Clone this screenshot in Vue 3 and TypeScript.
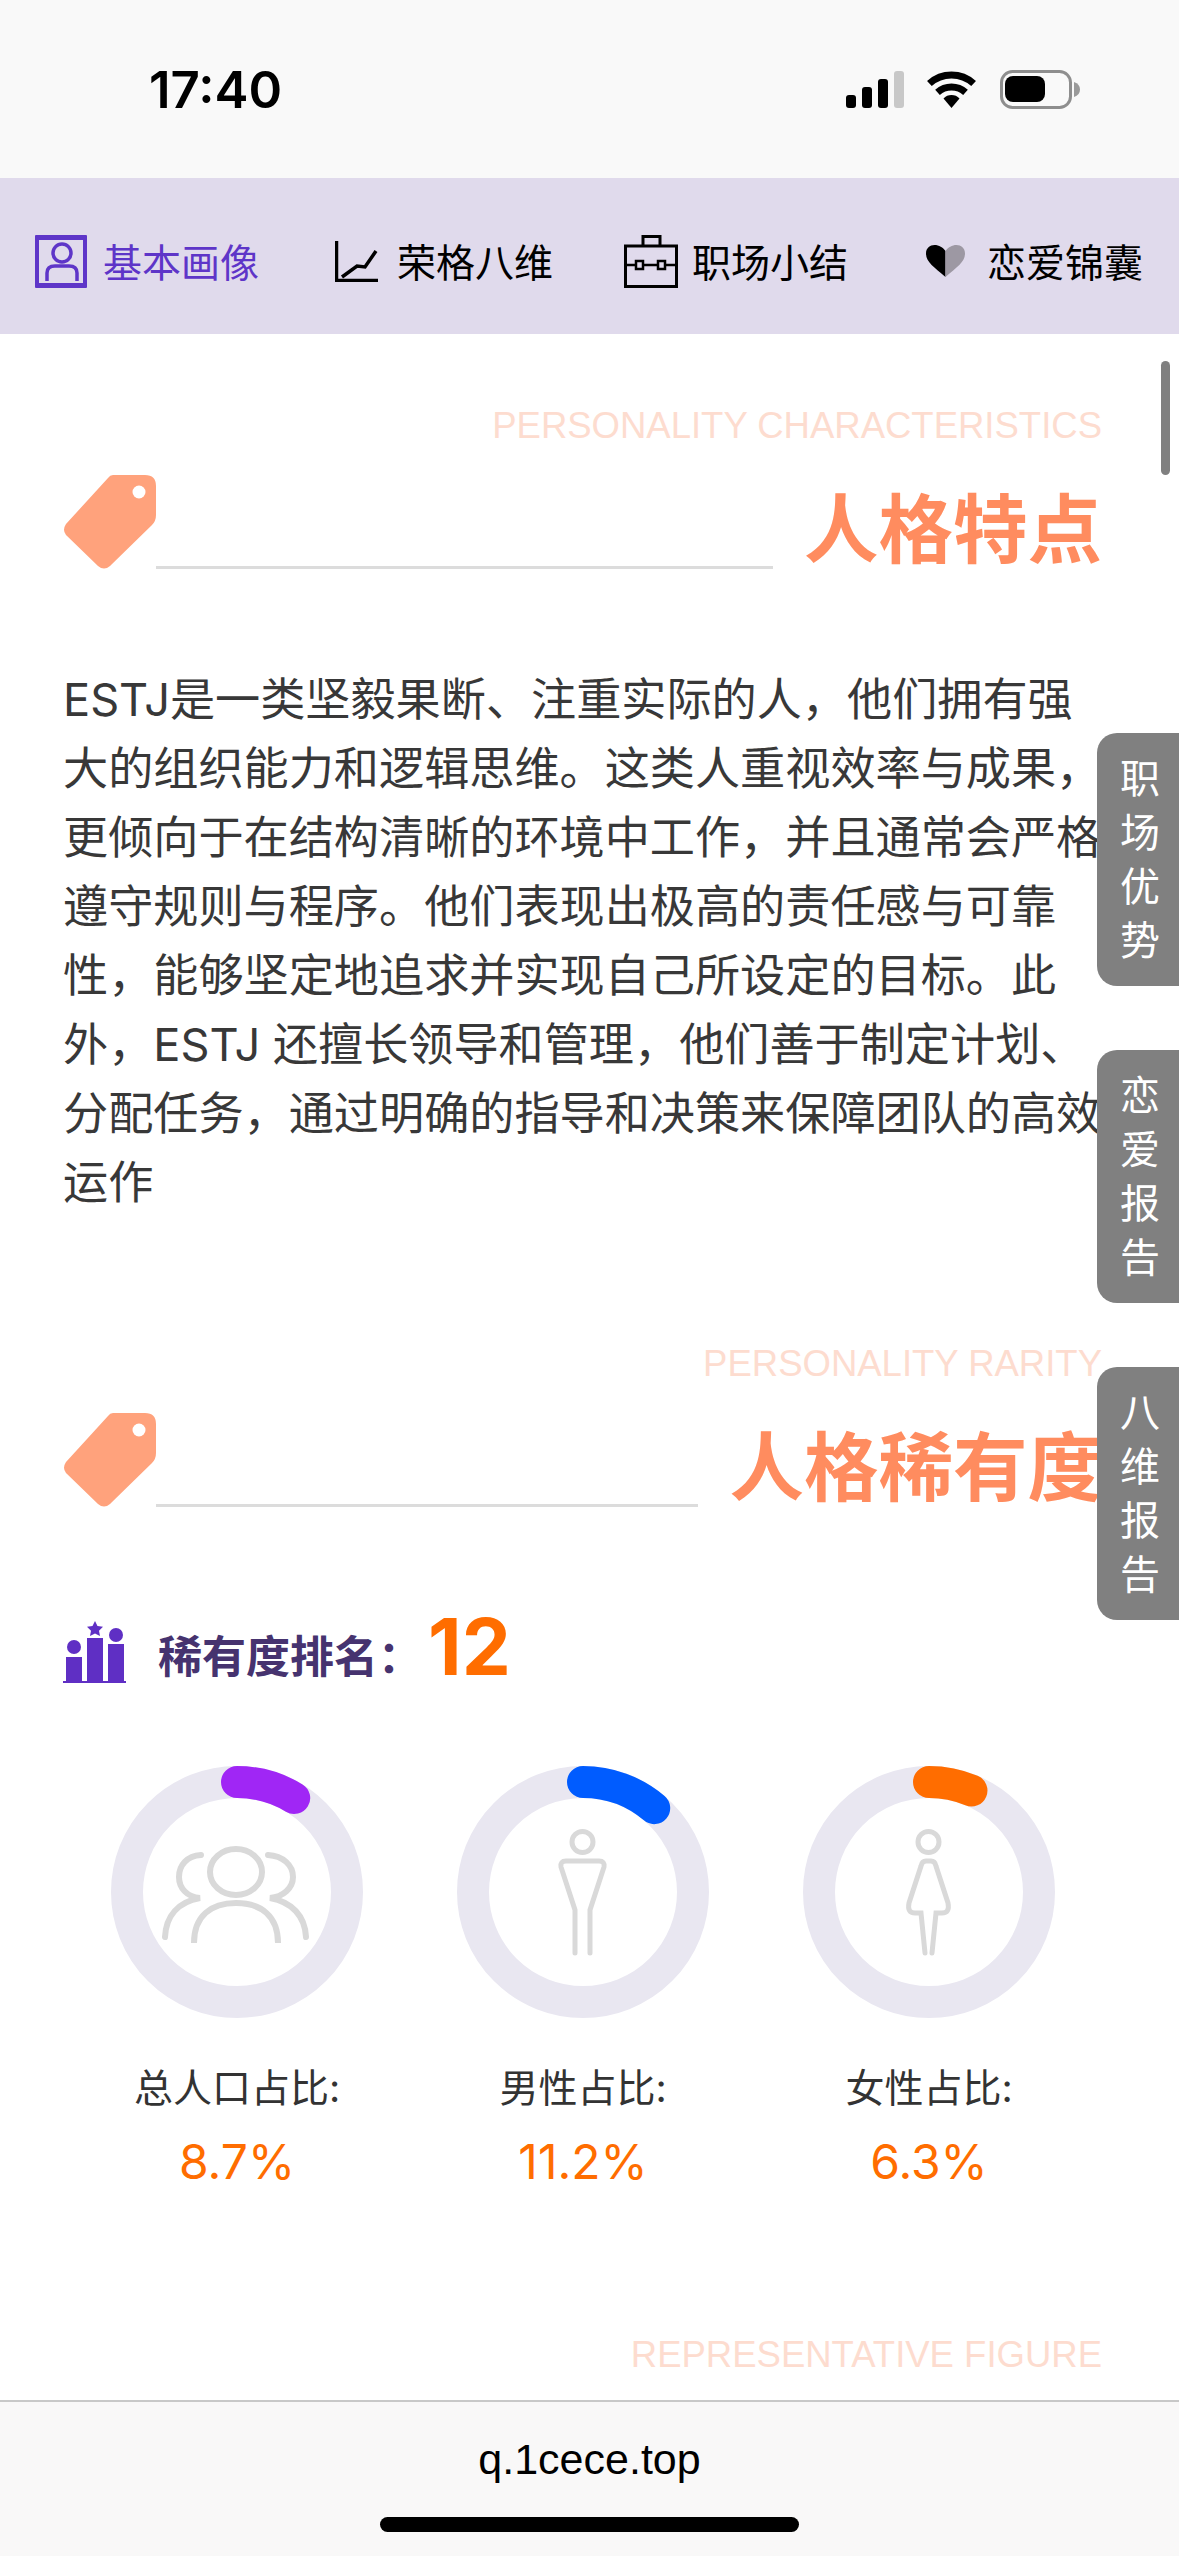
<template>
  <div class="phone">
    <!-- status bar -->
    <div class="status-bar">
      <span class="status-bar__time">17:40</span>
      <div class="status-bar__icons">
        <svg class="icon-signal" viewBox="0 0 58 37">
          <rect x="0" y="24" width="10" height="13" rx="3" fill="#000" />
          <rect x="16" y="16" width="10" height="21" rx="3" fill="#000" />
          <rect x="32" y="8" width="10" height="29" rx="3" fill="#000" />
          <rect x="48" y="0" width="10" height="37" rx="3" fill="#c8c8c8" />
        </svg>
        <svg class="icon-wifi" viewBox="0 0 51 37">
          <path d="M3.4 12.5A33 33 0 0 1 47.6 12.5" fill="none" stroke="#000" stroke-width="7" />
          <path d="M11.5 21.4A21 21 0 0 1 39.5 21.4" fill="none" stroke="#000" stroke-width="7" />
          <path d="M25.5 37L17.5 27.5A11 11 0 0 1 33.5 27.5Z" fill="#000" />
        </svg>
        <svg class="icon-battery" viewBox="0 0 80 39">
          <rect x="1.5" y="1.5" width="69" height="36" rx="11" fill="none" stroke="#8e8e8e" stroke-width="3" />
          <rect x="5" y="6" width="40" height="26" rx="8" fill="#000" />
          <path d="M74 12Q80 14 80 19.500Q80 25 74 27Z" fill="#9a9a9a" />
        </svg>
      </div>
    </div>

    <!-- tabs -->
    <div class="tabs">
      <div class="tab tab--active">
        <svg class="tab__icon tab__icon--profile" viewBox="0 0 52 53">
          <rect x="2" y="2.500" width="48" height="48" rx="1" fill="none" stroke="#5e35c8" stroke-width="4" />
          <rect x="0" y="0" width="52" height="5" rx="1" fill="#5e35c8" />
          <rect x="0" y="48" width="52" height="5" rx="1" fill="#5e35c8" />
          <circle cx="27" cy="18" r="9" fill="none" stroke="#5e35c8" stroke-width="3.500" />
          <path d="M12 46V38Q12 31 20 31H34Q42 31 42 38V46" fill="none" stroke="#5e35c8" stroke-width="3.500" />
        </svg>
        <span class="tab__text">基本画像</span>
      </div>
      <div class="tab">
        <svg class="tab__icon tab__icon--chart" viewBox="0 0 43 41">
          <path d="M1.500 0V39.500H43" fill="none" stroke="#000" stroke-width="3.500" />
          <path d="M7 36L22 25L30 26L41 10" fill="none" stroke="#000" stroke-width="3.500" />
        </svg>
        <span class="tab__text">荣格八维</span>
      </div>
      <div class="tab">
        <svg class="tab__icon tab__icon--case" viewBox="0 0 54 53">
          <rect x="1.500" y="11" width="51" height="40.500" fill="none" stroke="#000" stroke-width="3" />
          <path d="M19 11V1.500H36V11" fill="none" stroke="#000" stroke-width="3" />
          <path d="M2 30H52" fill="none" stroke="#000" stroke-width="2.500" />
          <rect x="12" y="26" width="7" height="8" fill="#e0daec" stroke="#000" stroke-width="2.500" />
          <rect x="34" y="26" width="7" height="8" fill="#e0daec" stroke="#000" stroke-width="2.500" />
        </svg>
        <span class="tab__text">职场小结</span>
      </div>
      <div class="tab">
        <svg class="tab__icon tab__icon--heart" viewBox="0 0 39 32">
          <path d="M19.500 32C8 22 0 17 0 8.500C0 3 4 0 8.500 0C13 0 17 2.500 19.500 6Z" fill="#000" />
          <path d="M19.500 32C31 22 39 17 39 8.500C39 3 35 0 30.500 0C26 0 22 2.500 19.500 6Z" fill="#9d98a3" />
        </svg>
        <span class="tab__text">恋爱锦囊</span>
      </div>
    </div>

    <div class="content">
      <!-- 人格特点 -->
      <section class="section">
        <div class="section__en">PERSONALITY CHARACTERISTICS</div>
        <div class="section__head">
          <svg class="section__tag" viewBox="0 0 93 94">
            <path d="M50 0H82Q93 0 93 11V40Q93 46 89 50L47 91Q41 96 35 91L3 60Q-1 55 3 49L45 3Q47 0 50 0Z" fill="#ffa27c" />
            <circle cx="76" cy="17" r="6.500" fill="#fff" />
          </svg>
          <div class="section__line"></div>
          <h2 class="section__title">人格特点</h2>
        </div>
        <p class="section__text">
          ESTJ是一类坚毅果断、注重实际的人，他们拥有强大的组织能力和逻辑思维。这类人重视效率与成果，更倾向于在结构清晰的环境中工作，并且通常会严格遵守规则与程序。他们表现出极高的责任感与可靠性，能够坚定地追求并实现自己所设定的目标。此外，ESTJ 还擅长领导和管理，他们善于制定计划、分配任务，通过明确的指导和决策来保障团队的高效运作
        </p>
      </section>

      <!-- 人格稀有度 -->
      <section class="section section--rarity">
        <div class="section__en">PERSONALITY RARITY</div>
        <div class="section__head">
          <svg class="section__tag" viewBox="0 0 93 94">
            <path d="M50 0H82Q93 0 93 11V40Q93 46 89 50L47 91Q41 96 35 91L3 60Q-1 55 3 49L45 3Q47 0 50 0Z" fill="#ffa27c" />
            <circle cx="76" cy="17" r="6.500" fill="#fff" />
          </svg>
          <div class="section__line"></div>
          <h2 class="section__title">人格稀有度</h2>
        </div>

        <div class="rank">
          <svg class="rank__icon" viewBox="0 0 63 62">
            <rect x="0" y="60" width="63" height="2" fill="#5f2fc4" />
            <rect x="3" y="36" width="16" height="25" fill="#5f2fc4" />
            <rect x="24" y="17" width="16" height="44" fill="#5f2fc4" />
            <rect x="45" y="23" width="16" height="38" fill="#5f2fc4" />
            <circle cx="11" cy="26" r="7" fill="#5f2fc4" />
            <circle cx="53" cy="14" r="7" fill="#5f2fc4" />
            <path d="M32 0L34.500 5L40 5.800L36 9.700L37 15L32 12.500L27 15L28 9.700L24 5.800L29.500 5Z" fill="#5f2fc4" />
          </svg>
          <span class="rank__label">稀有度排名：</span>
          <span class="rank__value">12</span>
        </div>

        <div class="rings">
          <div v-for="ring in rings" :key="ring.label" class="ring">
            <svg class="ring__chart" viewBox="0 0 252 252">
              <circle cx="126" cy="126" r="110" fill="none" stroke="#e9e7f1" stroke-width="32" />
              <circle
                cx="126"
                cy="126"
                r="110"
                fill="none"
                :stroke="ring.color"
                stroke-width="32"
                stroke-linecap="round"
                :stroke-dasharray="dash(ring.percent)"
                transform="rotate(-90 126 126)"
              />
              <g v-if="ring.kind === 'all'" fill="none" stroke="#d9d9d9" stroke-width="6">
                <ellipse cx="125" cy="106" rx="26" ry="23" />
                <path d="M83 177C83 150 100 137 125 137C150 137 167 150 167 177" />
                <path d="M90 89C76 90 68 99 68 111C68 122 76 131 89 132C67 136 55 150 54 171" stroke-linecap="round" />
                <path d="M157 89C172 90 182 99 182 111C182 122 172 131 159 132C181 136 194 150 195 171" stroke-linecap="round" />
              </g>
              <g v-else-if="ring.kind === 'male'" fill="none" stroke="#d9d9d9" stroke-width="5" stroke-linecap="round">
                <circle cx="125.500" cy="76" r="10.500" />
                <path d="M118 187V144L104 101Q103 95 109 95H142Q148 95 147 101L133 144V187" />
              </g>
              <g v-else fill="none" stroke="#d9d9d9" stroke-width="5" stroke-linecap="round">
                <circle cx="125.500" cy="76" r="10.500" />
                <path d="M122 187L118 147H112Q104 147 106 137L118 100Q119 95 123 95H128Q132 95 133 100L145 137Q147 147 139 147H133L129 187" />
              </g>
            </svg>
            <div class="ring__label">{{ ring.label }}</div>
            <div class="ring__value">{{ ring.percent }}%</div>
          </div>
        </div>
      </section>

      <section class="section section--figure">
        <div class="section__en">REPRESENTATIVE FIGURE</div>
      </section>
    </div>

    <!-- browser bar -->
    <div class="url-bar">
      <span class="url-bar__text">q.1cece.top</span>
      <div class="url-bar__home"></div>
    </div>

    <!-- overlays -->
    <div class="scrollbar"></div>
    <div class="side-tabs">
      <div v-for="item in sideTabs" :key="item" class="side-tab">
        <span class="side-tab__text">{{ item }}</span>
      </div>
    </div>
  </div>
</template>

<script setup lang="ts">
interface Ring {
  label: string
  percent: number
  color: string
  kind: 'all' | 'male' | 'female'
}

const rings: Ring[] = [
  { label: '总人口占比:', percent: 8.7, color: '#a026f5', kind: 'all' },
  { label: '男性占比:', percent: 11.2, color: '#005cff', kind: 'male' },
  { label: '女性占比:', percent: 6.3, color: '#ff6d00', kind: 'female' },
]

const sideTabs = ['职场优势', '恋爱报告', '八维报告']

const circumference = 2 * Math.PI * 110

const dash = (percent: number) => {
  const len = (circumference * percent) / 100
  return `${len} ${circumference - len}`
}
</script>

<style scoped>
.phone {
  position: relative;
  width: 1179px;
  height: 2556px;
  display: flex;
  flex-direction: column;
  overflow: hidden;
  background: #fff;
  font-family: "Inter", "Noto Sans CJK SC", sans-serif;
  color: #333;
}

/* status bar */
.status-bar {
  height: 178px;
  flex-shrink: 0;
  background: #f9f9f9;
  display: flex;
  align-items: center;
  justify-content: space-between;
  padding: 0 99px 0 149px;
  box-sizing: border-box;
}

.status-bar__time {
  font-size: 51px;
  font-weight: 600;
  color: #000;
}

.status-bar__icons {
  display: flex;
  align-items: center;
}

.icon-signal {
  width: 58px;
  height: 37px;
  margin-right: 22px;
}

.icon-wifi {
  width: 51px;
  height: 37px;
  margin-right: 23px;
}

.icon-battery {
  width: 80px;
  height: 39px;
}

/* tabs */
.tabs {
  height: 156px;
  flex-shrink: 0;
  background: #e0daec;
  display: grid;
  grid-template-columns: 300px 289px 302px auto;
  align-items: center;
  padding: 10px 0 0 35px;
  box-sizing: border-box;
}

.tab {
  display: flex;
  align-items: center;
  font-size: 39px;
  color: #000;
  white-space: nowrap;
}

.tab--active {
  color: #5e35c8;
}

.tab__text {
  margin-top: -3px;
}

.tab__icon {
  flex-shrink: 0;
}

.tab__icon--profile {
  width: 52px;
  height: 53px;
  margin-right: 16px;
}

.tab__icon--chart {
  width: 43px;
  height: 41px;
  margin-right: 19px;
}

.tab__icon--case {
  width: 54px;
  height: 53px;
  margin-right: 14px;
}

.tab__icon--heart {
  width: 39px;
  height: 32px;
  margin-right: 22px;
}

/* sections */
.content {
  flex: 1;
  overflow: hidden;
  padding-top: 70px;
}

.section {
  padding: 0 77px 0 63px;
}

.section--rarity {
  margin-top: 125px;
}

.section--figure {
  margin-top: 141px;
}

.section__en {
  font-family: "Liberation Sans", sans-serif;
  font-size: 36.5px;
  line-height: 44px;
  text-align: right;
  color: #fddccf;
  white-space: nowrap;
}

.section__head {
  display: flex;
  align-items: flex-end;
  margin-top: 27px;
  height: 94px;
}

.section__tag {
  width: 93px;
  height: 94px;
  flex-shrink: 0;
}

.section__line {
  flex: 1;
  height: 3px;
  background: #dcdcdc;
  margin-right: 31px;
}

.section__title {
  margin: 0;
  font-size: 74.5px;
  line-height: 78px;
  font-weight: 700;
  color: #ff8c5f;
  white-space: nowrap;
}

.section__text {
  margin: 96px 0 0;
  font-size: 45.15px;
  line-height: 69px;
  color: #383838;
}

/* rarity */
.rank {
  display: flex;
  align-items: flex-end;
  margin-top: 112px;
  height: 64px;
}

.rank__icon {
  width: 63px;
  height: 62px;
  flex-shrink: 0;
  margin-right: 32px;
}

.rank__label {
  font-size: 44px;
  line-height: 50px;
  font-weight: 700;
  color: #46336f;
  width: 270px;
  white-space: nowrap;
  padding-bottom: 1px;
}

.rank__value {
  font-size: 78px;
  line-height: 64px;
  font-weight: 700;
  color: #ff6d00;
  padding-bottom: 4px;
}

.rings {
  display: grid;
  grid-template-columns: repeat(3, 346px);
  margin: 83px 0 0 1px;
}

.ring {
  display: flex;
  flex-direction: column;
  align-items: center;
}

.ring__chart {
  width: 252px;
  height: 252px;
}

.ring__label {
  margin-top: 45px;
  font-size: 39px;
  line-height: 50px;
  color: #333;
}

.ring__value {
  margin-top: 19px;
  font-size: 48px;
  line-height: 60px;
  color: #ff6d00;
}

/* browser bar */
.url-bar {
  height: 156px;
  flex-shrink: 0;
  box-sizing: border-box;
  border-top: 2px solid #c8c8c8;
  background: #f9f8f8;
  display: flex;
  flex-direction: column;
  align-items: center;
}

.url-bar__text {
  margin-top: 31px;
  font-family: "Liberation Sans", sans-serif;
  font-size: 43px;
  line-height: 52px;
  color: #000;
}

.url-bar__home {
  margin-top: 32px;
  width: 419px;
  height: 15px;
  border-radius: 8px;
  background: #000;
}

/* overlays */
.scrollbar {
  position: absolute;
  top: 361px;
  left: 1161px;
  width: 9px;
  height: 114px;
  border-radius: 5px;
  background: #808080;
}

.side-tabs {
  position: absolute;
  top: 733px;
  right: 0;
  display: flex;
  flex-direction: column;
  gap: 64px;
}

.side-tab {
  width: 82px;
  height: 253px;
  box-sizing: border-box;
  padding-left: 23px;
  display: flex;
  align-items: center;
  border-radius: 20px 0 0 20px;
  background: #808080;
}

.side-tab__text {
  width: 40px;
  font-size: 40px;
  line-height: 54px;
  color: #fff;
}
</style>
